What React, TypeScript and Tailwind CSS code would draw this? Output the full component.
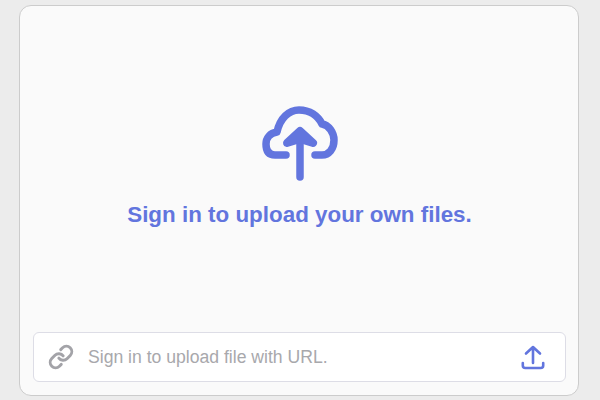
import { Link } from 'lucide-react';

export default function App() {
  return (
    <div className="h-[400px] w-[600px] bg-[#ececec] pt-[5px] pr-[21px] pb-[4px] pl-[19px] font-['Liberation_Sans',Arial,sans-serif]">
      <div className="flex h-full flex-col rounded-[12px] border border-[#cccccc] bg-[#fafafa] pr-[12px] pb-[13px] pl-[13px]">
        {/* Upload prompt */}
        <div className="flex flex-1 flex-col items-center pt-[98px]">
          <svg width="80" height="80" viewBox="0 0 80 80" fill="none" stroke="#6275de" strokeWidth="7.5" strokeLinecap="round" strokeLinejoin="round">
            <path d="M26 51H15C8 51 6 46 6 40C6 34 10 29 17 28C20 14 29 6 39 6C50 6 58 12 62 20C69 21 74 29 74 36C74 45 69 51 62 51H55" />
            <path d="M40 73V30" />
            <path d="M27 39L40 27L53 39L40 35Z" fill="#6275de" strokeWidth="8" />
          </svg>
          <div className="mt-[17px] text-[22.4px] leading-[28px] font-bold text-[#6275de]">Sign in to upload your own files.</div>
        </div>

        {/* URL field */}
        <div className="flex h-[50px] items-center rounded-[6px] border border-[#dddde6] bg-white pr-[19px] pl-[14px]">
          <Link className="h-[26px] w-[26px] text-[#a3a3a8]" strokeWidth={2.7} />
          <span className="ml-[14px] flex-1 text-[17.6px] text-[#a8a8ac]">Sign in to upload file with URL.</span>
          <svg width="26" height="26" viewBox="0 0 26 26" fill="none" stroke="#6275de" strokeWidth="2.6" strokeLinecap="round" strokeLinejoin="round">
            <path d="M13 19V3.500M6 9.500L13 3L20 9.500" />
            <path d="M2.800 19V21.500C2.800 23.200 3.600 24 5.300 24H20.700C22.400 24 23.200 23.200 23.200 21.500V19" />
          </svg>
        </div>
      </div>
    </div>
  );
}
